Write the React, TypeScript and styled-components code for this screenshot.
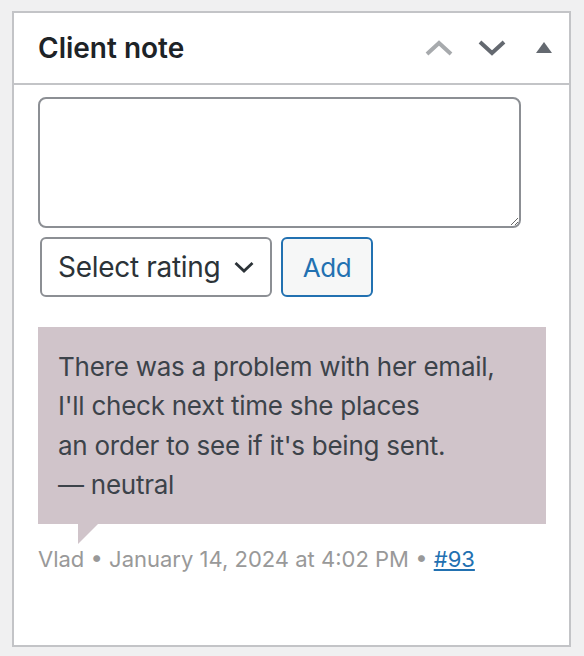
import React from "react";
import styled, { createGlobalStyle } from "styled-components";

const Global = createGlobalStyle`
  html, body { margin: 0; padding: 0; background: #f0f0f1; }
  body { font-family: Inter, Roboto, "Liberation Sans", sans-serif; }
  * { box-sizing: border-box; }
`;

const Page = styled.div`
  padding: 11px 0 0 12px;
`;

const Postbox = styled.section`
  width: 559px;
  height: 636px;
  background: #fff;
  border: 2px solid #c3c4c7;
  display: flex;
  flex-direction: column;
`;

const Header = styled.header`
  height: 72px;
  flex: none;
  display: flex;
  align-items: center;
  padding-left: 24px;
  border-bottom: 2px solid #c3c4c7;
`;

const Title = styled.h2`
  margin: 0;
  font-size: 28px;
  font-weight: 600;
  color: #1d2327;
`;

const Actions = styled.div`
  margin-left: auto;
  display: flex;
  align-items: center;
  height: 100%;
`;

const HandleButton = styled.button<{ $w: number; $color: string }>`
  width: ${(p) => p.$w}px;
  height: 70px;
  border: 0;
  padding: 0;
  background: transparent;
  display: flex;
  align-items: center;
  justify-content: center;
  color: ${(p) => p.$color};
  cursor: pointer;
`;

const Inside = styled.div`
  padding: 12px 24px 0 24px;
`;

const NoteInput = styled.textarea`
  display: block;
  width: 483px;
  height: 131px;
  border: 2px solid #8c8f94;
  border-radius: 8px;
  resize: vertical;
  font-family: inherit;
  font-size: 26px;
  padding: 8px 16px;
  outline: none;
`;

const Controls = styled.div`
  display: flex;
  gap: 9px;
  margin-top: 9px;
  padding-left: 2px;
`;

const SelectBox = styled.div`
  width: 232px;
  height: 60px;
  border: 2px solid #8c8f94;
  border-radius: 6px;
  background: #fff;
  display: flex;
  align-items: center;
  justify-content: space-between;
  padding: 0 16px 0 16px;
  font-size: 28px;
  letter-spacing: -0.3px;
  color: #2c3338;
`;

const AddButton = styled.button`
  width: 92px;
  height: 60px;
  border: 2px solid #2271b1;
  border-radius: 6px;
  background: #f6f7f7;
  color: #2271b1;
  font-family: inherit;
  font-size: 26px;
  letter-spacing: -0.5px;
  padding: 0;
  cursor: pointer;
`;

const NotesList = styled.ul`
  list-style: none;
  margin: 30px 0 0 0;
  padding: 0;
`;

const NoteItem = styled.li`
  margin: 0;
`;

const NoteContent = styled.div<{ $bg: string }>`
  position: relative;
  width: 508px;
  background: ${(p) => p.$bg};
  padding: 20px 20px;
  font-size: 26px;
  letter-spacing: -0.25px;
  line-height: 39.3px;
  color: #3c434a;
  &::after {
    content: "";
    position: absolute;
    left: 40px;
    bottom: -20px;
    border-style: solid;
    border-width: 20px 20px 0 0;
    border-color: ${(p) => p.$bg} transparent;
  }
`;

const Line = styled.p`
  margin: 0;
  white-space: nowrap;
`;

const Meta = styled.p`
  margin: 0;
  padding-top: 20px;
  font-size: 22px;
  line-height: 31px;
  color: #999;
`;

const MetaLink = styled.a`
  color: #2271b1;
  text-decoration: underline;
`;

export default function App() {
  return (
    <>
      <Global />
      <Page>
        <Postbox>
          <Header>
            <Title>Client note</Title>
            <Actions>
              <HandleButton $w={53} $color="#a7aaad" aria-label="Move up">
                <svg width="28" height="16" viewBox="0 0 28 16">
                  <path d="M2 14 L14 3 L26 14" fill="none" stroke="currentColor" strokeWidth="4" />
                </svg>
              </HandleButton>
              <HandleButton $w={53} $color="#646970" aria-label="Move down">
                <svg width="28" height="16" viewBox="0 0 28 16">
                  <path d="M2 2 L14 13 L26 2" fill="none" stroke="currentColor" strokeWidth="4" />
                </svg>
              </HandleButton>
              <HandleButton $w={51} $color="#646970" aria-label="Toggle panel">
                <svg width="16" height="12" viewBox="0 0 16 12">
                  <path d="M8 0 L16 11 L0 11 Z" fill="currentColor" />
                </svg>
              </HandleButton>
            </Actions>
          </Header>
          <Inside>
            <NoteInput />
            <Controls>
              <SelectBox>
                <span>Select rating</span>
                <svg width="20" height="12" viewBox="0 0 20 12">
                  <path d="M1.5 2 L10 10 L18.5 2" fill="none" stroke="#2c3338" strokeWidth="2.8" />
                </svg>
              </SelectBox>
              <AddButton>Add</AddButton>
            </Controls>
            <NotesList>
              <NoteItem>
                <NoteContent $bg="#d0c4ca">
                  <Line>There was a problem with her email,</Line>
                  <Line>I'll check next time she places</Line>
                  <Line>an order to see if it's being sent.</Line>
                  <Line>— neutral</Line>
                </NoteContent>
                <Meta>
                  Vlad • January 14, 2024 at 4:02 PM • <MetaLink href="#">#93</MetaLink>
                </Meta>
              </NoteItem>
            </NotesList>
          </Inside>
        </Postbox>
      </Page>
    </>
  );
}
